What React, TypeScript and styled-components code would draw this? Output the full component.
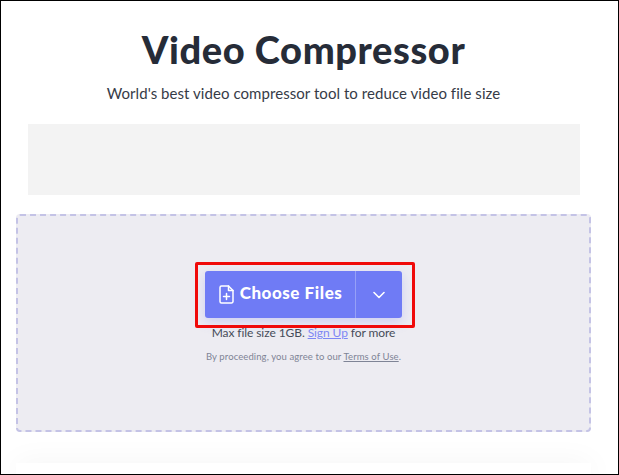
import * as React from 'react'
import styled, { createGlobalStyle } from 'styled-components'

const GlobalStyle = createGlobalStyle`
  html, body {
    margin: 0;
    padding: 0;
    background: #fff;
  }
  body {
    font-family: 'Lato', 'Liberation Sans', sans-serif;
  }
`

const Page = styled.div`
  box-sizing: border-box;
  width: 619px;
  height: 475px;
  padding-right: 12px;
  border: 1px solid #000;
  overflow: hidden;
  background: #fff;
  display: flex;
  flex-direction: column;
  align-items: center;
  & > * {
    flex-shrink: 0;
  }
`

const Title = styled.h1`
  margin: 28px 0 0;
  font-size: 38px;
  line-height: 40px;
  font-weight: 900;
  letter-spacing: 0.6px;
  color: #262c38;
`

const Subtitle = styled.p`
  margin: 14px 0 0;
  font-size: 15px;
  line-height: 20px;
  font-weight: 400;
  letter-spacing: 0.06px;
  color: #363b47;
`

const AdSlot = styled.div`
  width: 552px;
  height: 71px;
  margin: 21px 0 0 1px;
  background: #f3f3f3;
`

const DropZone = styled.div`
  box-sizing: border-box;
  width: 575px;
  height: 218px;
  margin-top: 19px;
  padding-top: 55px;
  background: #edecf2;
  border: 2px dashed #c4c3e6;
  border-radius: 4px;
  display: flex;
  flex-direction: column;
  align-items: center;
`

const ButtonWrap = styled.div`
  position: relative;
  display: flex;
`

const Highlight = styled.div`
  position: absolute;
  top: -9px;
  left: -10px;
  right: -13px;
  bottom: -10px;
  border: 3px solid #f00a0a;
  border-radius: 2px;
  pointer-events: none;
`

const SplitButton = styled.div`
  display: flex;
  width: 197px;
  height: 47px;
  border-radius: 3px;
  background: #6f7bf5;
  color: #fff;
  box-shadow: 0 4px 12px rgba(111, 123, 245, 0.25);
`

const MainAction = styled.button`
  flex: 1;
  display: flex;
  align-items: center;
  justify-content: center;
  gap: 6px;
  padding: 0 0 0 1px;
  border: 0;
  background: none;
  color: inherit;
  font-family: inherit;
  font-size: 17px;
  font-weight: 900;
  letter-spacing: 0.55px;
`

const ActionLabel = styled.span`
  position: relative;
  top: -2px;
`

const CaretAction = styled.button`
  width: 47px;
  display: flex;
  align-items: center;
  justify-content: center;
  padding: 0;
  border: 0;
  border-left: 1px solid #96a0f7;
  background: none;
  color: inherit;
`

const MaxSize = styled.p`
  margin: 7px 0 0;
  font-size: 12px;
  line-height: 16px;
  letter-spacing: -0.08px;
  color: #474c59;
`

const SignUp = styled.a`
  color: #7d87f5;
  text-decoration: underline;
`

const Terms = styled.p`
  margin: 9px 0 0;
  font-size: 9.5px;
  line-height: 14px;
  letter-spacing: 0.1px;
  color: #7f8496;
`

const TermsLink = styled.a`
  color: inherit;
  text-decoration: underline;
`

const NextCard = styled.div`
  width: 575px;
  height: 20px;
  margin-top: 31px;
  background: #fff;
  box-shadow: 0 0 30px rgba(0, 0, 0, 0.05);
`

const FileIcon = () => (
  <svg width="15" height="19" viewBox="0 0 15 19" fill="none" stroke="currentColor" strokeWidth="1.5" strokeLinejoin="round" strokeLinecap="round">
    <path d="M2.500 1h7l4.500 4.500v11a1.500 1.500 0 0 1-1.500 1.500h-10A1.500 1.500 0 0 1 1 16.500v-14A1.500 1.500 0 0 1 2.500 1z" />
    <path d="M9.500 1v4.500H14" />
    <path d="M7.500 8.500v6M4.500 11.500h6" />
  </svg>
)

const ChevronIcon = () => (
  <svg width="12" height="8" viewBox="0 0 12 8" fill="none" stroke="currentColor" strokeWidth="1.6" strokeLinecap="round" strokeLinejoin="round">
    <path d="M1 1.500l5 5 5-5" />
  </svg>
)

const App: React.FC = () => {
  return (
    <Page>
      <GlobalStyle />
      <Title>Video Compressor</Title>
      <Subtitle>World's best video compressor tool to reduce video file size</Subtitle>
      <AdSlot />
      <DropZone>
        <ButtonWrap>
          <SplitButton>
            <MainAction>
              <FileIcon />
              <ActionLabel>Choose Files</ActionLabel>
            </MainAction>
            <CaretAction>
              <ChevronIcon />
            </CaretAction>
          </SplitButton>
          <Highlight />
        </ButtonWrap>
        <MaxSize>
          Max file size 1GB. <SignUp>Sign Up</SignUp> for more
        </MaxSize>
        <Terms>
          By proceeding, you agree to our <TermsLink>Terms of Use</TermsLink>.
        </Terms>
      </DropZone>
      <NextCard />
    </Page>
  )
}

export default App
